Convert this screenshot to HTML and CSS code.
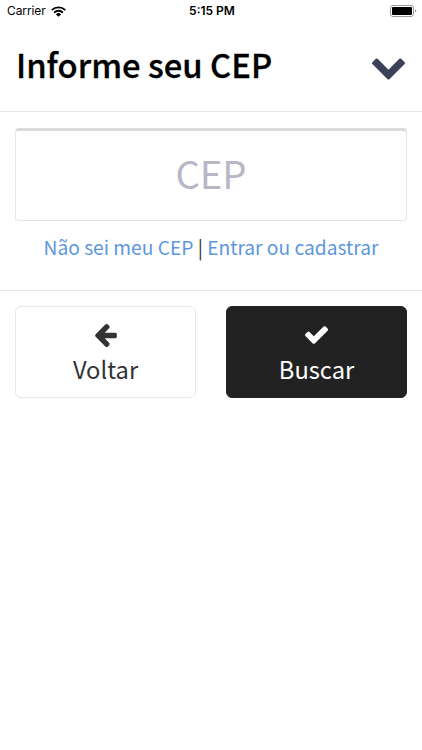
FILE: index.html
```
<!DOCTYPE html>
<html lang="pt-BR">
<head>
    <meta charset="UTF-8">
    <meta name="viewport" content="width=device-width, initial-scale=1.0">
    <title>Informe seu CEP</title>
    <link rel="stylesheet" href="styles.css">
</head>
<body>
<div class="status-bar">
    <div class="carrier">
        <span>Carrier</span>
        <svg class="wifi" viewBox="0 0 14 10">
            <path d="M.7 3.700a9 9 0 0 1 12.600 0M2.900 6a5.800 5.800 0 0 1 8.200 0" fill="none" stroke="#000" stroke-width="1.8"/>
            <path d="M4.600 7.700a3.400 3.400 0 0 1 4.800 0L7 10z"/>
        </svg>
    </div>
    <div class="time">5:15 PM</div>
    <div class="power">
        <svg class="battery" viewBox="0 0 27 12">
            <rect x=".5" y=".5" width="23" height="11" rx="2.5" fill="#fff" stroke="#999"/>
            <rect x="2" y="2" width="20" height="8" rx="1"/>
            <path d="M25 4.2q1.4.6 1.4 1.8T25 7.8z" fill="#999"/>
        </svg>
    </div>
</div>
<header class="header">
    <h1>Informe seu CEP</h1>
    <svg class="chevron" viewBox="90 533 1612 1035">
        <path d="M1683 808l-742 741q-19 19-45 19t-45-19l-742-741q-19-19-19-45.500t19-45.500l166-165q19-19 45-19t45 19l531 531 531-531q19-19 45-19t45 19l166 165q19 19 19 45.500t-19 45.500z"/>
    </svg>
</header>
<form class="content">
    <input class="cep" type="text" placeholder="CEP">
    <div class="links">
        <a href="#">Não sei meu CEP</a> | <a href="#">Entrar ou cadastrar</a>
    </div>
</form>
<div class="actions">
    <button class="button">
        <svg class="arrow" viewBox="192 181 1472 1558">
            <path d="M1664 896v128q0 53-32.500 90.500t-84.500 37.500h-704l293 294q38 36 38 90t-38 90l-75 76q-37 37-90 37-52 0-91-37l-651-652q-37-37-37-90 0-52 37-91l651-650q38-38 91-38 52 0 90 38l75 74q38 38 38 91t-38 91l-293 293h704q52 0 84.500 37.500t32.500 90.500z"/>
        </svg>
        <span>Voltar</span>
    </button>
    <button class="button dark">
        <svg class="check" viewBox="121 334 1550 1188">
            <path d="M1671 566q0 40-28 68l-724 724-136 136q-28 28-68 28t-68-28l-136-136-362-362q-28-28-28-68t28-68l136-136q28-28 68-28t68 28l294 295 656-657q28-28 68-28t68 28l136 136q28 28 28 68z"/>
        </svg>
        <span>Buscar</span>
    </button>
</div>
</body>
</html>
```
FILE: styles.css
```
* {
    box-sizing: border-box;
}
body {
    margin: 0;
    background-color: #fff;
    color: #333;
    font-family: 'Noto Sans CJK SC', sans-serif;
}
svg {
    display: block;
    fill: currentColor;
}
.status-bar {
    display: grid;
    grid-template-columns: 1fr auto 1fr;
    align-items: center;
    height: 22px;
    padding: 0 5px 0 7px;
    color: #000;
    font: 12px/22px Inter, sans-serif;
}
.carrier {
    display: flex;
    align-items: center;
    gap: 5px;
    letter-spacing: -0.1px;
}
.wifi {
    width: 15px;
    height: 11px;
}
.time {
    font-weight: 600;
}
.power {
    display: flex;
    justify-content: flex-end;
}
.battery {
    width: 27px;
    height: 12px;
}
.header {
    display: flex;
    justify-content: space-between;
    align-items: flex-start;
    height: 90px;
    padding: 18px 17px 0 16px;
    border-bottom: 1px solid #e6e6e8;
}
h1 {
    margin: 0;
    color: #000;
    font-size: 32.8px;
    font-weight: 500;
    line-height: 48px;
    -webkit-text-stroke: 0.3px #000;
}
.chevron {
    width: 33px;
    height: 22px;
    margin-top: 18px;
    color: #3b4158;
}
.content {
    height: 179px;
    padding: 16px 15px 0;
    border-bottom: 1px solid #e6e6e8;
}
.cep {
    display: block;
    width: 100%;
    height: 93px;
    padding: 0 0 6px;
    border: 1px solid #e3e6e8;
    border-top: 3px solid #d8dadc;
    border-radius: 4px;
    font: 38.3px 'Noto Sans CJK SC', sans-serif;
    text-align: center;
}
.cep::placeholder {
    color: #b7b7c7;
}
.links {
    margin-top: 11px;
    font-size: 19.2px;
    line-height: 30px;
    text-align: center;
}
.links a {
    color: #5c97de;
    text-decoration: none;
}
.actions {
    display: grid;
    grid-template-columns: 1fr 1fr;
    gap: 30px;
    padding: 15px 15px 0;
}
.button {
    display: flex;
    flex-direction: column;
    align-items: center;
    height: 92px;
    padding: 17px 0 0;
    border: 1px solid #e9e9e9;
    border-radius: 6px;
    background-color: #fff;
    color: #333;
    font: 23.7px/36px 'Noto Sans CJK SC', sans-serif;
}
.dark {
    border-color: #222;
    background-color: #222;
    color: #fff;
}
.arrow {
    width: 22px;
    height: 23px;
    margin-bottom: 4px;
}
.check {
    width: 23px;
    height: 18px;
    margin: 2px 0 7px;
}
```
